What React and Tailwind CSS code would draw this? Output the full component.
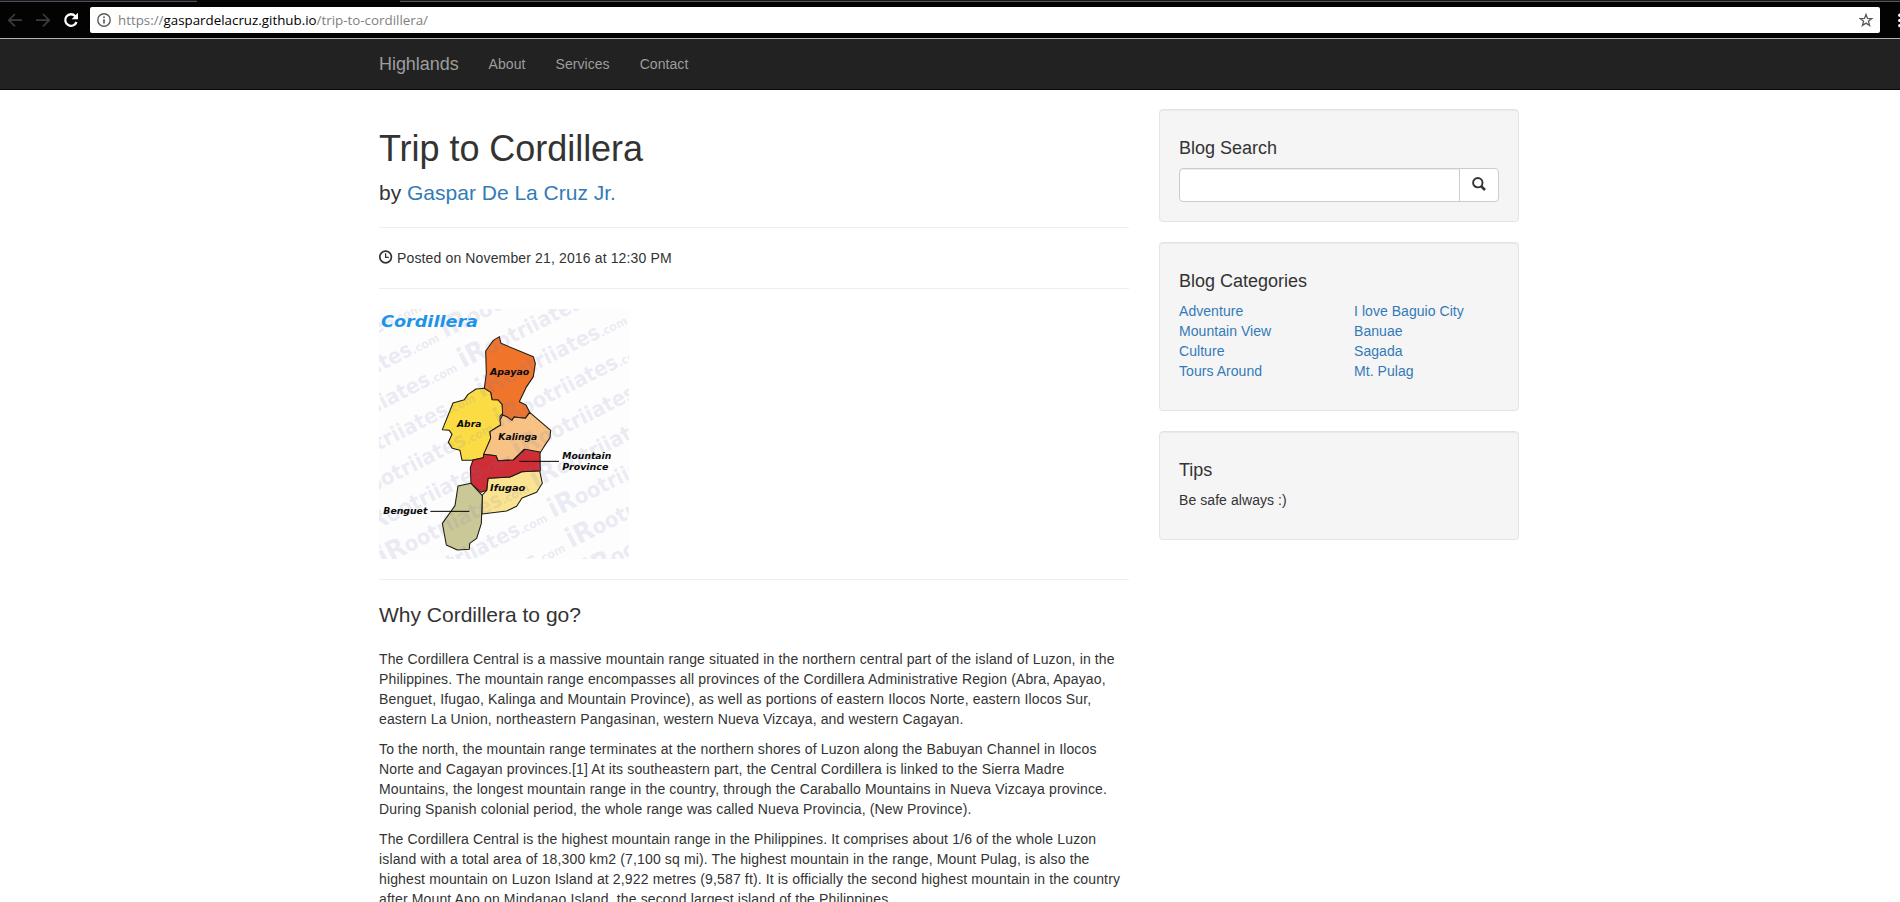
const REGION_STROKE = { stroke: '#1c1a12', strokeWidth: 3.2, strokeLinejoin: 'round' };

const regions = [
  { name: 'apayao', fill: '#f1742b', points: '388,95 393,115 490,155 496,175 490,215 468,248 448,290 468,300 479,322 466,340 432,336 426,346 410,335 396,330 396,298 384,285 366,284 362,262 343,250 349,205 347,138 370,106' },
  { name: 'abra', fill: '#fbdc45', points: '343,250 362,262 366,284 384,285 396,298 398,325 390,334 392,360 360,380 362,400 341,458 305,466 276,466 270,436 247,430 235,412 246,388 238,376 217,374 249,294 283,284 294,268 318,252' },
  { name: 'kalinga', fill: '#f8c285', points: '398,330 410,335 426,346 432,336 466,340 479,322 542,376 540,398 522,425 510,444 462,433 430,465 384,467 378,452 341,448 362,400 360,380 392,360 390,345' },
  { name: 'ifugao', fill: '#fae391', points: '354,520 420,516 455,500 509,497 517,535 500,562 456,579 440,604 410,618 336,627 337,570 350,556' },
  { name: 'mountain', fill: '#cf2e37', points: '341,448 378,452 384,467 430,465 465,433 510,441 511,497 455,500 420,516 354,520 350,556 333,562 303,535 301,488 309,465 340,458' },
  { name: 'benguet', fill: '#cbc897', points: '264,543 303,535 337,572 334,655 320,700 299,715 298,733 262,735 229,720 217,655 255,602' },
];

const labels = [
  { text: 'Apayao', x: 360, y: 209, w: 118 },
  { text: 'Abra', x: 261, y: 365, w: 73 },
  { text: 'Kalinga', x: 385, y: 404, w: 117 },
  { text: 'Ifugao', x: 360, y: 559, w: 106 },
  { text: 'Benguet', x: 40, y: 626, w: 132 },
  { text: 'Mountain', x: 577, y: 461, w: 147 },
  { text: 'Province', x: 577, y: 495, w: 138 },
];

// Diagonal repeats of the watermark that fall inside the 750-unit map frame.
const marks = [];
for (let row = -3; row <= 9; row++) {
  for (let n = -1; n <= 1; n++) {
    const x = 280 + 54 * row + 456 * n;
    const y = 190 + 90 * row - 232 * n;
    const visibleFrom = Math.max(x, 27, x + (y - 780) * 1.96);
    const visibleTo = Math.min(x + 440, 777, x + (y - 12) * 1.96);
    if (visibleTo - visibleFrom > 30) marks.push({ x, y });
  }
}

function ProvinceMap() {
  return (
    <svg width="250" height="250" viewBox="27 12 750 750" className="block" fontFamily="'DejaVu Sans', sans-serif">
      <rect x="27" y="12" width="750" height="750" fill="#fdfdfe" />
      {regions.map((r) => (
        <polygon key={r.name} points={r.points} fill={r.fill} {...REGION_STROKE} />
      ))}
      <g fill="#7474b0" fillOpacity="0.15" fontWeight="bold">
        {marks.map((m, i) => (
          <text key={i} transform={`translate(${m.x} ${m.y}) rotate(-27)`} textLength="495" lengthAdjust="spacingAndGlyphs">
            <tspan fontSize="82">iR</tspan>
            <tspan fontSize="64">ootriiates</tspan>
            <tspan fontSize="36">.com</tspan>
          </text>
        ))}
      </g>
      <path d="M448 469H567M181 619H298" stroke="#000" strokeWidth="3" />
      <text x="33" y="65" textLength="291" lengthAdjust="spacingAndGlyphs" fontSize="50" fontWeight="bold" fontStyle="italic" fill="#1f93e6">Cordillera</text>
      {labels.map((l) => (
        <text key={l.text} x={l.x} y={l.y} textLength={l.w} lengthAdjust="spacingAndGlyphs" fontSize="28" fontWeight="bold" fontStyle="italic" fill="#0a0a0a">{l.text}</text>
      ))}
    </svg>
  );
}

function BrowserBar() {
  return (
    <div className="flex h-[39px] flex-col border-b border-[#b4b4b4] bg-[#030303]">
      <div className="flex h-[2px] shrink-0">
        <div className="w-[197px] border-b border-[#4a4f58] bg-[#15181d]" />
        <div className="w-[203px] bg-[#050505]" />
        <div className="flex-1 border-b border-[#55585c] bg-[#1a1a1a]" />
      </div>
      <div className="flex items-start pt-[5px]">
        <div className="flex h-[26px] w-[90px] shrink-0 items-center">
          <svg width="90" height="26" fill="none">
            <g stroke="#3c3c3c" strokeWidth="1.7">
              <path d="M22 13.2H9M15 7L8.8 13.2L15 19.4" />
              <path d="M36 13.2H49M43 7L49.2 13.2L43 19.4" />
            </g>
            <path d="M75.4 9.2A5.8 5.8 0 1 0 76.5 15" stroke="#fff" strokeWidth="2.3" />
            <path d="M78 5.8V12.2H71.6Z" fill="#fff" />
          </svg>
        </div>
        <div className="flex h-[26px] w-[1790px] shrink-0 items-center rounded-[2px] bg-white pl-[7px] pr-[7px]">
          <svg width="14" height="14" viewBox="0 0 14 14" fill="none" stroke="#5a5a5a" className="shrink-0">
            <circle cx="7" cy="7" r="6.2" strokeWidth="1.4" />
            <path d="M7 6.2V10.6M7 3.4V5" strokeWidth="1.7" />
          </svg>
          <span className="ml-[7px] flex-1 whitespace-nowrap font-['Open_Sans',sans-serif] text-[13.35px] leading-[26px] text-[#808080]">
            https://<span className="text-black">gaspardelacruz.github.io</span>/trip-to-cordillera/
          </span>
          <svg width="14" height="14" viewBox="0 0 14 14" fill="none" stroke="#5a5a5a" strokeWidth="1.3" className="shrink-0">
            <path d="M7 1.4L8.5 5.4L12.8 5.6L9.4 8.2L10.6 12.5L7 10.1L3.4 12.5L4.6 8.2L1.2 5.6L5.5 5.4Z" />
          </svg>
        </div>
        <svg width="20" height="26" fill="#fff" className="shrink-0">
          <circle cx="19.8" cy="8.2" r="1.7" />
          <circle cx="19.8" cy="13.4" r="1.7" />
          <circle cx="19.8" cy="18.6" r="1.7" />
        </svg>
      </div>
    </div>
  );
}

function Well({ title, children }) {
  return (
    <section className="mb-5 rounded border border-[#e3e3e3] bg-[#f5f5f5] p-[19px] shadow-[inset_0_1px_1px_rgba(0,0,0,0.05)]">
      <h4 className="mt-[10px] mb-[10px] text-[18px] leading-[19px]">{title}</h4>
      {children}
    </section>
  );
}

function LinkList({ items }) {
  return (
    <ul className="mb-[10px] tracking-[0.05px] text-[#337ab7]">
      {items.map((item) => (
        <li key={item}><a>{item}</a></li>
      ))}
    </ul>
  );
}

function Paragraph({ lines }) {
  return (
    <p className="mb-[10px] whitespace-nowrap tracking-[0.14px]">
      {lines.map((line) => (
        <span key={line} className="block">{line}</span>
      ))}
    </p>
  );
}

const story = [
  [
    'The Cordillera Central is a massive mountain range situated in the northern central part of the island of Luzon, in the',
    'Philippines. The mountain range encompasses all provinces of the Cordillera Administrative Region (Abra, Apayao,',
    'Benguet, Ifugao, Kalinga and Mountain Province), as well as portions of eastern Ilocos Norte, eastern Ilocos Sur,',
    'eastern La Union, northeastern Pangasinan, western Nueva Vizcaya, and western Cagayan.',
  ],
  [
    'To the north, the mountain range terminates at the northern shores of Luzon along the Babuyan Channel in Ilocos',
    'Norte and Cagayan provinces.[1] At its southeastern part, the Central Cordillera is linked to the Sierra Madre',
    'Mountains, the longest mountain range in the country, through the Caraballo Mountains in Nueva Vizcaya province.',
    'During Spanish colonial period, the whole range was called Nueva Provincia, (New Province).',
  ],
  [
    'The Cordillera Central is the highest mountain range in the Philippines. It comprises about 1/6 of the whole Luzon',
    'island with a total area of 18,300 km2 (7,100 sq mi). The highest mountain in the range, Mount Pulag, is also the',
    'highest mountain on Luzon Island at 2,922 metres (9,587 ft). It is officially the second highest mountain in the country',
    'after Mount Apo on Mindanao Island, the second largest island of the Philippines.',
  ],
];

export default function App() {
  return (
    <div className="h-[902px] w-[1900px] overflow-hidden bg-white font-['Liberation_Sans',Arial,sans-serif] text-[14px] leading-5 text-[#333]">
      <BrowserBar />
      <nav className="h-[51px] border-b border-[#080808] bg-[#222] text-[#9d9d9d]">
        <div className="mx-auto flex w-[1142px] py-[15px]">
          <a className="mr-[30px] text-[18px] tracking-[-0.05px]">Highlands</a>
          <a className="mr-[30px] tracking-[0.06px]">About</a>
          <a className="mr-[30px] tracking-[0.06px]">Services</a>
          <a className="tracking-[0.06px]">Contact</a>
        </div>
      </nav>
      <div className="mx-auto mt-[19px] flex w-[1142px] items-start gap-[30px]">
        <main className="w-[750px] shrink-0">
          <h1 className="mt-5 mb-[10px] text-[36px] leading-[39px] tracking-[-0.04px]">Trip to Cordillera</h1>
          <p className="text-[21px] leading-[29px]">by <a className="text-[#337ab7]">Gaspar De La Cruz Jr.</a></p>
          <hr className="mt-5 mb-5 border-[#eee]" />
          <p className="flex items-center gap-[4px] tracking-[0.14px]">
            <svg width="14" height="14" viewBox="0 0 14 14" fill="none" stroke="#333" className="-mt-[2px]">
              <circle cx="6.6" cy="7" r="5.8" strokeWidth="1.7" />
              <path d="M6.6 3.2V7.3H9.8" strokeWidth="1.3" />
            </svg>
            Posted on November 21, 2016 at 12:30 PM
          </p>
          <hr className="mt-5 mb-5 border-[#eee]" />
          <ProvinceMap />
          <hr className="mt-5 mb-5 border-[#eee]" />
          <p className="mb-5 text-[21px] leading-[29px]">Why Cordillera to go?</p>
          {story.map((lines) => (
            <Paragraph key={lines[0]} lines={lines} />
          ))}
        </main>
        <aside className="w-[360px] shrink-0">
          <Well title="Blog Search">
            <div className="flex h-[34px]">
              <input type="text" aria-label="Search" className="w-[281px] rounded-l border border-[#ccc] bg-white px-3 shadow-[inset_0_1px_1px_rgba(0,0,0,0.075)]" />
              <button type="button" aria-label="Submit search" className="-ml-px flex w-[40px] items-center justify-center rounded-r border border-[#ccc] bg-white">
                <svg width="14" height="14" viewBox="0 0 14 14" fill="none" stroke="#333" className="-mt-[2px]">
                  <circle cx="5.8" cy="5.7" r="4.7" strokeWidth="1.9" />
                  <path d="M9 9L13 13" strokeWidth="2.5" />
                </svg>
              </button>
            </div>
          </Well>
          <Well title="Blog Categories">
            <div className="grid grid-cols-[175px_145px]">
              <LinkList items={['Adventure', 'Mountain View', 'Culture', 'Tours Around']} />
              <LinkList items={['I love Baguio City', 'Banuae', 'Sagada', 'Mt. Pulag']} />
            </div>
          </Well>
          <Well title="Tips">
            <p className="mb-[10px] tracking-[0.07px]">Be safe always :)</p>
          </Well>
        </aside>
      </div>
    </div>
  );
}
